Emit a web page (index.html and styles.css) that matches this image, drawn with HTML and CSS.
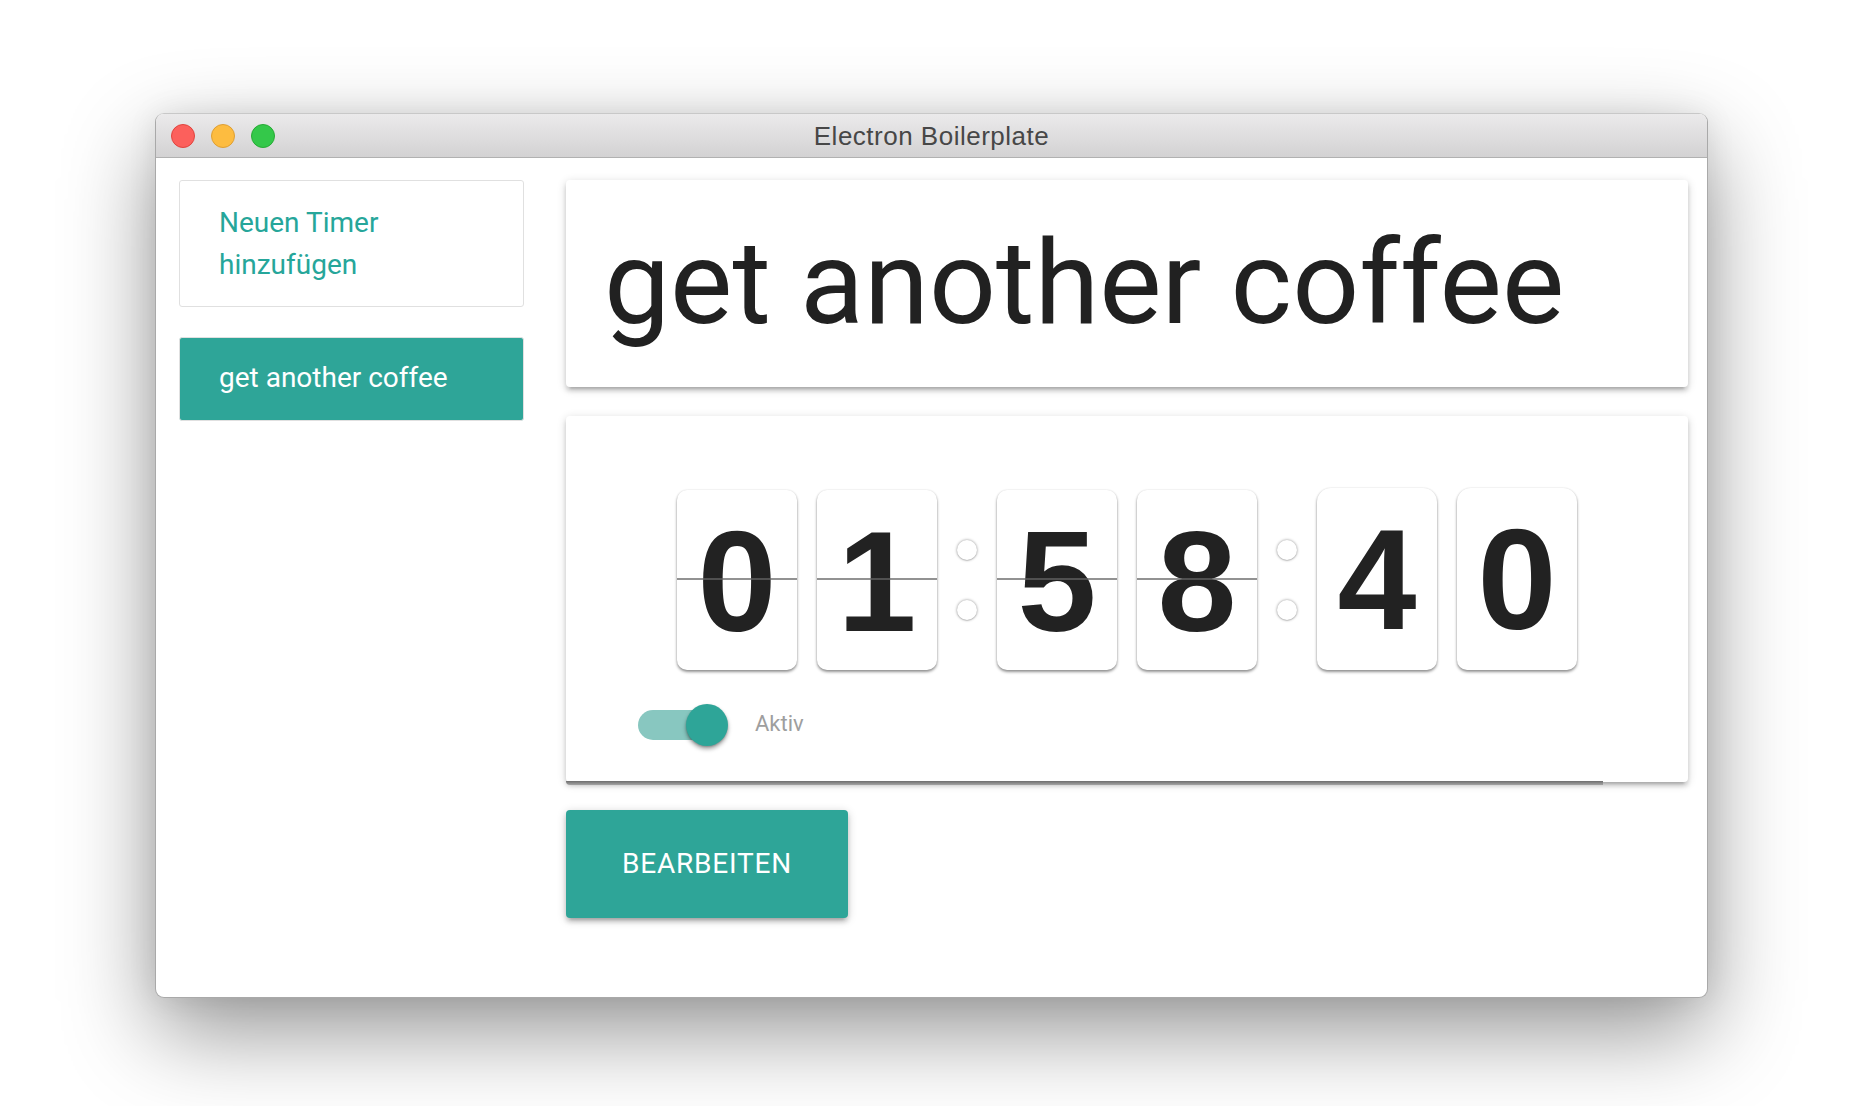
FILE: index.html
```html
<!DOCTYPE html>
<html lang="de">
<head>
<meta charset="utf-8">
<title>Electron Boilerplate</title>
<link rel="stylesheet" href="styles.css">
</head>
<body>
<div class="window">
  <div class="titlebar">
    <div class="lights">
      <span class="light red"></span>
      <span class="light yellow"></span>
      <span class="light green"></span>
    </div>
    <div class="wintitle">Electron Boilerplate</div>
    <div></div>
  </div>
  <div class="content">
    <aside class="sidebar">
      <div class="item add">Neuen Timer hinzufügen</div>
      <div class="item active">get another coffee</div>
    </aside>
    <main class="main">
      <div class="panel title-card">get another coffee</div>
      <div class="panel timer-card">
        <div class="clock">
          <div class="pair">
            <div class="flip"><span class="line"></span><span class="digit">0</span></div>
            <div class="flip"><span class="line"></span><span class="digit">1</span></div>
          </div>
          <div class="colon"><span class="dot"></span><span class="dot"></span></div>
          <div class="pair">
            <div class="flip"><span class="line"></span><span class="digit">5</span></div>
            <div class="flip"><span class="line"></span><span class="digit">8</span></div>
          </div>
          <div class="colon"><span class="dot"></span><span class="dot"></span></div>
          <div class="pair">
            <div class="flip flipping"><span class="digit">4</span></div>
            <div class="flip flipping"><span class="digit">0</span></div>
          </div>
        </div>
        <div class="toggle-row">
          <div class="switch"><span class="track"></span><span class="knob"></span></div>
          <span class="toggle-label">Aktiv</span>
        </div>
        <div class="progress" style="width: 92.4%"></div>
      </div>
      <button class="btn">BEARBEITEN</button>
    </main>
  </div>
</div>
</body>
</html>
```

FILE: styles.css
```css
* { box-sizing: border-box; }

html, body {
  margin: 0;
  padding: 0;
  background: #ffffff;
  width: 1858px;
  height: 1106px;
  overflow: hidden;
}

body {
  padding-top: 113px;
  padding-left: 155px;
  font-family: Roboto, "Noto Sans", Arial, sans-serif;
}

.window {
  width: 1553px;
  height: 885px;
  background: #ffffff;
  border: 1px solid #a9a9a9;
  border-top-color: #c8c8c8;
  border-radius: 9px;
  box-shadow: 0 34px 90px rgba(0, 0, 0, 0.42), 0 0 30px rgba(0, 0, 0, 0.08);
  display: flex;
  flex-direction: column;
  overflow: hidden;
}

.titlebar {
  height: 44px;
  flex: none;
  display: grid;
  grid-template-columns: 1fr auto 1fr;
  align-items: center;
  background: linear-gradient(#ebeaeb, #d3d2d3);
  border-bottom: 1px solid #b1b1b1;
}

.lights {
  display: flex;
  gap: 16px;
  padding-left: 15px;
  padding-top: 1px;
}

.light {
  width: 24px;
  height: 24px;
  border-radius: 50%;
  display: block;
}
.light.red { background: #fc605c; border: 1px solid #e0443e; }
.light.yellow { background: #fdbc40; border: 1px solid #de9f34; }
.light.green { background: #34c84a; border: 1px solid #27aa35; }

.wintitle {
  font-family: "Liberation Sans", Arial, sans-serif;
  font-size: 26px;
  letter-spacing: 0.5px;
  color: #474747;
  padding-top: 2px;
}

.content {
  flex: 1;
  display: flex;
  align-items: flex-start;
  padding: 22px 19px 0 23px;
  gap: 42px;
}

.sidebar {
  width: 345px;
  flex: none;
  display: flex;
  flex-direction: column;
  gap: 30px;
}

.item {
  font-size: 28px;
  line-height: 42px;
  padding: 20px 40px 20px 39px;
  border: 1px solid #e0e0e0;
  border-radius: 3px;
}

.item.add {
  color: #26a69a;
  padding-top: 21px;
  padding-bottom: 20px;
  padding-right: 120px;
}

.item.active {
  background: #2ea598;
  color: #ffffff;
  padding-top: 19px;
  padding-bottom: 21px;
}

.main {
  width: 1122px;
  flex: none;
  display: flex;
  flex-direction: column;
  align-items: flex-start;
}

.panel {
  width: 100%;
  background: #ffffff;
  border-radius: 4px;
  box-shadow: 0 4px 4px 0 rgba(0, 0, 0, 0.14), 0 6px 2px -4px rgba(0, 0, 0, 0.12), 0 2px 10px 0 rgba(0, 0, 0, 0.16);
}

.title-card {
  font-size: 117.6px;
  line-height: 130px;
  color: #212121;
  padding: 38px 38px 39px 38px;
  white-space: nowrap;
}

.timer-card {
  margin-top: 29px;
  padding: 72px 0 36px 0;
  position: relative;
}

.clock {
  display: flex;
  justify-content: center;
  align-items: flex-end;
  height: 182px;
}

.pair {
  display: flex;
  gap: 20px;
  align-items: flex-end;
}

.flip {
  width: 120px;
  height: 180px;
  background: #ffffff;
  border-radius: 10px;
  position: relative;
  box-shadow: 0 2px 3px rgba(0, 0, 0, 0.42), 0 0 2px rgba(0, 0, 0, 0.12);
  display: flex;
  justify-content: center;
  overflow: hidden;
}

.flip.flipping {
  height: 182px;
  border-radius: 14px 14px 10px 10px;
}

.digit {
  font-family: "Liberation Sans", Arial, sans-serif;
  font-weight: bold;
  font-size: 142px;
  line-height: 184px;
  color: #222222;
}

.line {
  position: absolute;
  left: 0;
  right: 0;
  top: 88px;
  height: 2px;
  background: rgba(100, 100, 100, 0.7);
}

.colon {
  width: 60px;
  height: 180px;
  display: flex;
  flex-direction: column;
  justify-content: center;
  align-items: center;
  gap: 40px;
}

.dot {
  width: 20px;
  height: 20px;
  border-radius: 50%;
  background: #ffffff;
  box-shadow: 0 0 3px rgba(0, 0, 0, 0.45), 0 1px 1px rgba(0, 0, 0, 0.1);
}

.toggle-row {
  display: flex;
  align-items: center;
  height: 42px;
  margin-top: 34px;
  padding-left: 72px;
}

.switch {
  position: relative;
  width: 72px;
  height: 30px;
}

.track {
  display: block;
  width: 72px;
  height: 30px;
  border-radius: 15px;
  background: #88c7c0;
}

.knob {
  position: absolute;
  left: 48px;
  top: -6px;
  width: 42px;
  height: 42px;
  border-radius: 50%;
  background: #2ea598;
  box-shadow: 0 3px 4px rgba(0, 0, 0, 0.35), 0 1px 2px rgba(0, 0, 0, 0.2);
}

.toggle-label {
  margin-left: 45px;
  font-size: 22px;
  color: #9e9e9e;
  padding-bottom: 4px;
}

.progress {
  position: absolute;
  left: 0;
  top: 100%;
  height: 4px;
  margin-top: -1px;
  background: linear-gradient(#6d6d6d, #a5a5a5);
  border-bottom-left-radius: 4px;
}

.btn {
  margin-top: 28px;
  height: 108px;
  padding: 0 56px;
  border: none;
  border-radius: 4px;
  background: #2ea598;
  color: #ffffff;
  font-family: Roboto, "Noto Sans", Arial, sans-serif;
  font-size: 28px;
  letter-spacing: 0.8px;
  line-height: 108px;
  box-shadow: 0 4px 4px 0 rgba(0, 0, 0, 0.14), 0 6px 2px -4px rgba(0, 0, 0, 0.12), 0 2px 10px 0 rgba(0, 0, 0, 0.2);
  cursor: pointer;
}
```
